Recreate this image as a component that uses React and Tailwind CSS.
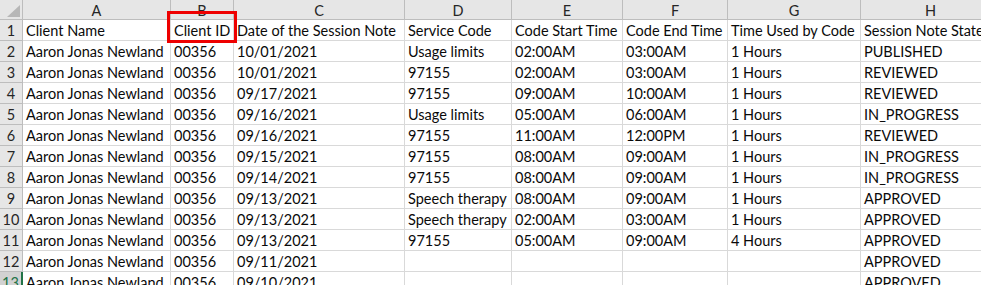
import React from "react";

const cols = [
  { key: "A", w: "w-[148px]" },
  { key: "B", w: "w-[63px]" },
  { key: "C", w: "w-[171px]" },
  { key: "D", w: "w-[107px]" },
  { key: "E", w: "w-[111px]" },
  { key: "F", w: "w-[105px]" },
  { key: "G", w: "w-[133px]" },
  { key: "H", w: "w-[140px]" },
];

const rows = [
  ["Client Name", "Client ID", "Date of the Session Note", "Service Code", "Code Start Time", "Code End Time", "Time Used by Code", "Session Note State"],
  ["Aaron Jonas Newland", "00356", "10/01/2021", "Usage limits", "02:00AM", "03:00AM", "1 Hours", "PUBLISHED"],
  ["Aaron Jonas Newland", "00356", "10/01/2021", "97155", "02:00AM", "03:00AM", "1 Hours", "REVIEWED"],
  ["Aaron Jonas Newland", "00356", "09/17/2021", "97155", "09:00AM", "10:00AM", "1 Hours", "REVIEWED"],
  ["Aaron Jonas Newland", "00356", "09/16/2021", "Usage limits", "05:00AM", "06:00AM", "1 Hours", "IN_PROGRESS"],
  ["Aaron Jonas Newland", "00356", "09/16/2021", "97155", "11:00AM", "12:00PM", "1 Hours", "REVIEWED"],
  ["Aaron Jonas Newland", "00356", "09/15/2021", "97155", "08:00AM", "09:00AM", "1 Hours", "IN_PROGRESS"],
  ["Aaron Jonas Newland", "00356", "09/14/2021", "97155", "08:00AM", "09:00AM", "1 Hours", "IN_PROGRESS"],
  ["Aaron Jonas Newland", "00356", "09/13/2021", "Speech therapy", "08:00AM", "09:00AM", "1 Hours", "APPROVED"],
  ["Aaron Jonas Newland", "00356", "09/13/2021", "Speech therapy", "02:00AM", "03:00AM", "1 Hours", "APPROVED"],
  ["Aaron Jonas Newland", "00356", "09/13/2021", "97155", "05:00AM", "09:00AM", "4 Hours", "APPROVED"],
  ["Aaron Jonas Newland", "00356", "09/11/2021", "", "", "", "", "APPROVED"],
  ["Aaron Jonas Newland", "00356", "09/10/2021", "", "", "", "", "APPROVED"],
];

export default function App() {
  return (
    <div className="relative h-[285px] w-[981px] overflow-hidden bg-white font-['Lato',sans-serif] text-[14.5px] text-[#0a0a0a]">
      {/* column letters */}
      <div className="flex h-[20px]">
        <div className="relative w-[23px] shrink-0 border-r border-b border-[#bdbdbd] bg-[#e6e6e6]">
          <svg className="absolute left-[7px] top-[5px]" width="13" height="12" viewBox="0 0 13 12">
            <polygon points="13,0 13,12 0,12" fill="#b7b7b7" />
          </svg>
        </div>
        {cols.map((c) => (
          <div
            key={c.key}
            className={`${c.w} shrink-0 border-r border-b border-[#bdbdbd] bg-[#e6e6e6] pt-px text-center leading-[19px] text-[#262626]`}
          >
            {c.key}
          </div>
        ))}
      </div>

      {rows.map((r, i) => (
        <div key={i} className="flex h-[21px]">
          <div
            className={
              i === 12
                ? "w-[23px] shrink-0 border-r-2 border-b border-r-[#217346] border-b-[#bdbdbd] bg-[#d2d2d2] pt-px text-center leading-[20px] text-[#217346]"
                : "w-[23px] shrink-0 border-r border-b border-[#bdbdbd] bg-[#e6e6e6] pt-px text-center leading-[20px] text-[#262626]"
            }
          >
            {i + 1}
          </div>
          {r.map((v, j) => (
            <div
              key={j}
              className={`${cols[j].w} shrink-0 overflow-hidden whitespace-nowrap border-r border-b border-[#d9d9d9] pl-[3px] pt-px leading-[20px]`}
            >
              {v}
            </div>
          ))}
        </div>
      ))}

      {/* highlight box */}
      <div className="absolute left-[167px] top-[11px] h-[32px] w-[70px] border-[3px] border-[#ee0000]" />
    </div>
  );
}
